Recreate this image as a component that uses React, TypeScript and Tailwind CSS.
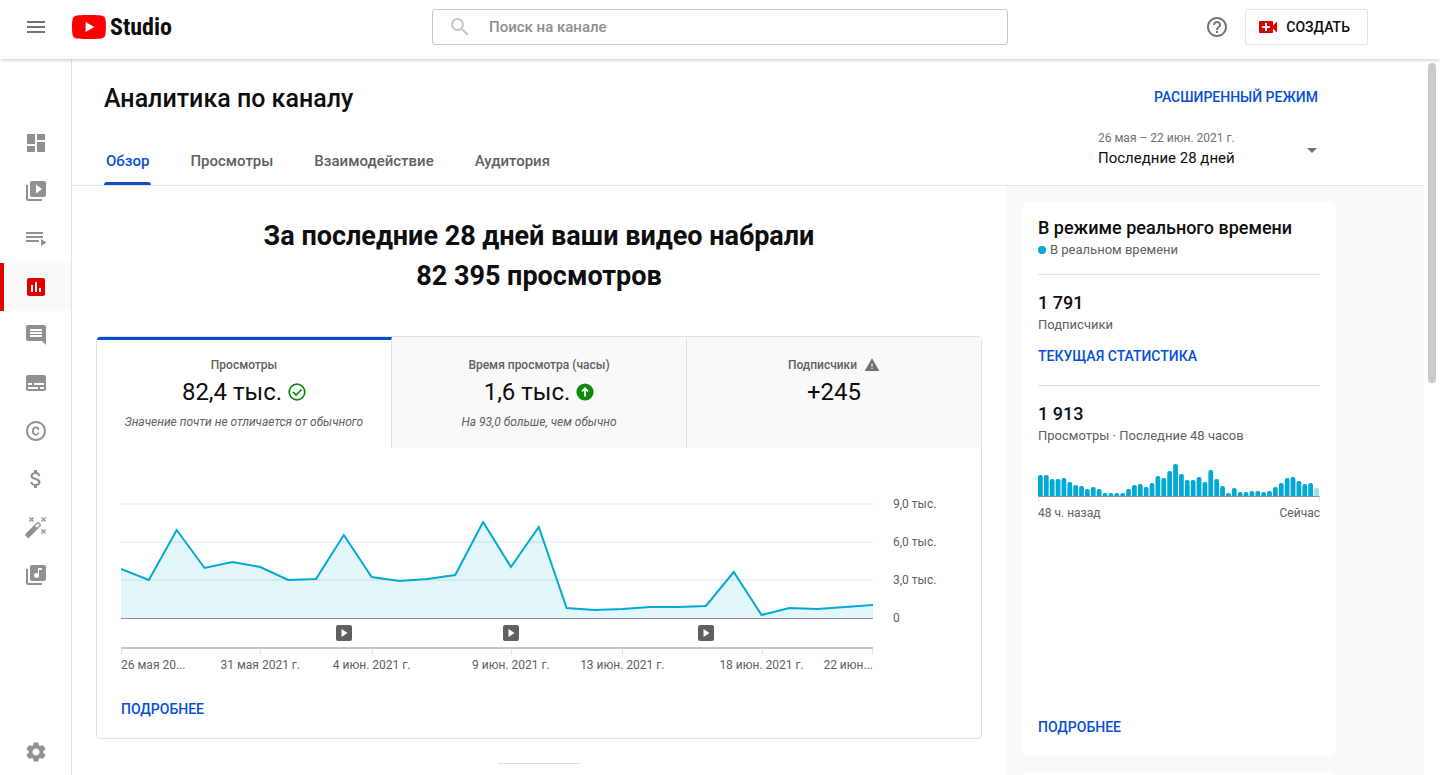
import { useState } from "react";
import {
  MdArrowDropDown,
  MdAttachMoney,
  MdComment,
  MdCopyright,
  MdDashboard,
  MdHelpOutline,
  MdInsertChart,
  MdLibraryMusic,
  MdMenu,
  MdSearch,
  MdSettings,
  MdSubtitles,
  MdVideoCall,
  MdVideoLibrary,
  MdWarning,
} from "react-icons/md";

const CHART_HEIGHT = 116;

// Daily views as chart y coordinates, 26 May to 22 June
const views = [
  66, 77, 27, 65, 59, 64, 77, 76, 32, 74, 78, 76, 72, 19, 64, 24, 105, 107, 106, 104, 104, 103, 69, 112, 105, 106,
  104, 102,
];

const hourly = [
  21, 21, 17, 17, 18, 14, 11, 10, 7, 9, 7, 3, 3, 3, 3, 7, 11, 12, 9, 13, 20, 18, 25, 32, 22, 16, 16, 19, 14, 26, 17,
  10, 3, 8, 4, 4, 5, 5, 4, 5, 9, 13, 18, 19, 15, 12, 13, 8,
];

const axisDates = [
  { day: 0, label: "26 мая 20..." },
  { day: 5, label: "31 мая 2021 г." },
  { day: 9, label: "4 июн. 2021 г." },
  { day: 14, label: "9 июн. 2021 г." },
  { day: 18, label: "13 июн. 2021 г." },
  { day: 23, label: "18 июн. 2021 г." },
  { day: 27, label: "22 июн..." },
];

const uploads = [8, 14, 21];

const percent = (day: number) => `${(day / 27) * 100}%`;

function PlaylistIcon() {
  return (
    <svg viewBox="0 0 24 24" width="24" height="24" fill="currentColor">
      <path d="M2 5h17v2H2zM2 9h17v2H2zM2 13h13v2H2zM17 12l5.5 3.5L17 19z" />
    </svg>
  );
}

function WandIcon() {
  return (
    <svg viewBox="0 0 24 24" width="24" height="24">
      <path
        fill="currentColor"
        fillRule="evenodd"
        d="M1.6 18.8 13 7.4a1.4 1.4 0 0 1 2 0l1.6 1.6a1.4 1.4 0 0 1 0 2L5.2 22.4a1.4 1.4 0 0 1-2 0L1.6 20.8a1.4 1.4 0 0 1 0-2zM11.2 11l1.8 1.8 2.3-2.2c.3-.3.3-.6 0-.9l-.9-.9c-.3-.3-.6-.3-.9 0z"
      />
      <path
        stroke="currentColor"
        strokeWidth="1.3"
        fill="none"
        d="m5.5 2.5 4 4m0-4-4 4m12-4 4 4m0-4-4 4m0 8 4 4m0-4-4 4"
      />
    </svg>
  );
}

function Logo() {
  return (
    <a href="#" aria-label="YouTube Studio" className="flex items-center gap-1 text-[#0d0d0d]">
      <svg viewBox="0 0 34 24" width="34" height="24">
        <path
          fill="#f00"
          d="M33.3 3.8A4.3 4.3 0 0 0 30.3.8C27.6 0 17 0 17 0S6.4 0 3.7.8a4.3 4.3 0 0 0-3 3C0 6.4 0 12 0 12s0 5.6.7 8.2a4.3 4.3 0 0 0 3 3C6.4 24 17 24 17 24s10.6 0 13.3-.8a4.3 4.3 0 0 0 3-3C34 17.6 34 12 34 12s0-5.6-.7-8.2z"
        />
        <path fill="#fff" d="M13.6 17.1V6.9l8.8 5.1z" />
      </svg>
      <span className="font-['Roboto_Condensed','Liberation_Sans_Narrow','Liberation_Sans',sans-serif] text-[24px] leading-6 font-bold">
        Studio
      </span>
    </a>
  );
}

const navItems = [
  { id: "dashboard", label: "Панель управления", icon: <MdDashboard size={24} /> },
  { id: "content", label: "Контент", icon: <MdVideoLibrary size={24} /> },
  { id: "playlists", label: "Плейлисты", icon: <PlaylistIcon /> },
  { id: "analytics", label: "Аналитика", icon: <MdInsertChart size={24} /> },
  { id: "comments", label: "Комментарии", icon: <MdComment size={24} /> },
  { id: "subtitles", label: "Субтитры", icon: <MdSubtitles size={24} /> },
  { id: "copyright", label: "Авторские права", icon: <MdCopyright size={24} /> },
  { id: "monetization", label: "Монетизация", icon: <MdAttachMoney size={24} /> },
  { id: "customization", label: "Настройка канала", icon: <WandIcon /> },
  { id: "audio", label: "Фонотека", icon: <MdLibraryMusic size={24} /> },
];

function Header() {
  return (
    <header className="relative z-10 grid h-[59px] shrink-0 grid-cols-[1fr_minmax(0,576px)_1fr] items-center bg-white pb-[5px] shadow-[0_1px_4px_rgba(0,0,0,0.22)]">
      <div className="flex items-center gap-6 pl-6">
        <button aria-label="Меню" className="text-[#717171]">
          <MdMenu size={24} />
        </button>
        <Logo />
      </div>
      <label className="flex h-9 items-center gap-[17px] rounded-[3px] border border-[#c8c8c8] pl-[15px]">
        <MdSearch size={24} className="text-[#c4c4c4]" />
        <input
          type="text"
          aria-label="Поиск на канале"
          placeholder="Поиск на канале"
          className="min-w-0 flex-1 bg-transparent text-[15px] font-medium outline-none placeholder:text-[#8f8f8f]"
        />
      </label>
      <div className="flex items-center justify-end gap-4 pr-[72px]">
        <button aria-label="Справка" className="text-[#717171]">
          <MdHelpOutline size={24} />
        </button>
        <button className="flex h-9 items-center gap-1.5 rounded-[2px] border border-[#e3e3e3] pr-[17px] pl-2.5 text-[14px] font-medium">
          <MdVideoCall size={24} className="text-[#d90000]" />
          СОЗДАТЬ
        </button>
      </div>
    </header>
  );
}

function Sidebar() {
  return (
    <nav className="flex w-[72px] shrink-0 flex-col border-r border-[#e3e3e3] pt-[60px] text-[#909090]">
      {navItems.map((item) => {
        const active = item.id === "analytics";
        return (
          <a
            key={item.id}
            href="#"
            aria-label={item.label}
            className={
              active
                ? "flex h-12 items-center border-l-4 border-[#e00000] bg-[#f9f9f9] pl-5 text-[#e00000]"
                : "flex h-12 items-center pl-6"
            }
          >
            {item.icon}
          </a>
        );
      })}
      <a href="#" aria-label="Настройки" className="mt-auto flex h-[46px] items-center pl-6">
        <MdSettings size={24} />
      </a>
    </nav>
  );
}

function PageHeader() {
  const [tab, setTab] = useState("Обзор");

  return (
    <div className="flex justify-between border-b border-[#e3e3e3] pl-8">
      <div>
        <h1 className="pt-6 text-[25px] leading-8 font-medium">Аналитика по каналу</h1>
        <div className="mt-[22px] flex gap-[37px]">
          {["Обзор", "Просмотры", "Взаимодействие", "Аудитория"].map((name) => (
            <button
              key={name}
              onClick={() => setTab(name)}
              className={
                name === tab
                  ? "relative h-12 px-0.5 text-[15px] font-medium text-[#064fd5]"
                  : "relative h-12 px-0.5 text-[15px] font-medium text-[#606060]"
              }
            >
              {name}
              {name === tab && <span className="absolute inset-x-0 bottom-0 h-[3px] rounded-t-[3px] bg-[#064fd5]" />}
            </button>
          ))}
        </div>
      </div>
      <div className="mr-[106px] flex w-[220px] flex-col pt-7">
        <a href="#" className="self-end text-[14px] leading-5 font-medium text-[#064fd5]">
          РАСШИРЕННЫЙ РЕЖИМ
        </a>
        <button className="mt-[21px] flex items-center justify-between text-left">
          <span>
            <span className="block text-[12px] leading-5 text-[#717171]">26 мая – 22 июн. 2021 г.</span>
            <span className="block text-[15px] leading-5">Последние 28 дней</span>
          </span>
          <MdArrowDropDown size={24} className="mt-1 -mr-1.5 text-[#717171]" />
        </button>
      </div>
    </div>
  );
}

function MetricTabs() {
  const base = "flex flex-1 flex-col items-center border-t-[3px] pt-[15px] pb-4";

  return (
    <div className="flex divide-x divide-[#e0e0e0]">
      <button className={`${base} border-t-[#064fd5] bg-white`}>
        <span className="text-[12px] leading-5 font-medium text-[#606060]">Просмотры</span>
        <span className="flex items-center gap-1.5 text-[24px] leading-[34px]">
          82,4 тыс.
          <svg viewBox="0 0 18 18" width="18" height="18" fill="none" stroke="#0a8a0a" strokeWidth="1.7">
            <circle cx="9" cy="9" r="7.8" />
            <path d="m5 9 3 3 5.5-5.5" />
          </svg>
        </span>
        <span className="mt-[3px] text-[12px] leading-5 text-[#606060] italic">
          Значение почти не отличается от обычного
        </span>
      </button>
      <button className={`${base} border-t-transparent bg-[#f9f9f9]`}>
        <span className="text-[12px] leading-5 font-medium text-[#606060]">Время просмотра (часы)</span>
        <span className="flex items-center gap-1.5 text-[24px] leading-[34px]">
          1,6 тыс.
          <svg viewBox="0 0 18 18" width="18" height="18">
            <circle cx="9" cy="9" r="8.6" fill="#0a8a0a" />
            <path d="M9 13.5V6M6 8.3l3-3 3 3" fill="none" stroke="#fff" strokeWidth="1.8" />
          </svg>
        </span>
        <span className="mt-[3px] text-[12px] leading-5 text-[#606060] italic">На 93,0 больше, чем обычно</span>
      </button>
      <button className={`${base} border-t-transparent bg-[#f9f9f9]`}>
        <span className="flex items-center gap-[7px] text-[12px] leading-5 font-medium text-[#606060]">
          Подписчики
          <MdWarning size={16} className="text-[#717171]" />
        </span>
        <span className="text-[24px] leading-[34px]">+245</span>
      </button>
    </div>
  );
}

function ViewsChart() {
  const line = views.map((y, i) => `${(i / 27) * 752},${y}`).join(" ");

  return (
    <div className="flex gap-5 px-6 pt-[55px]">
      <div className="min-w-0 flex-1">
        <svg viewBox="0 0 752 116" preserveAspectRatio="none" height={CHART_HEIGHT} className="block w-full">
          {[1, 39, 77].map((y) => (
            <rect key={y} y={y - 1} width="752" height="2" className="fill-[#f1f1f1]" />
          ))}
          <polygon points={`0,115 ${line} 752,115`} fill="#03a9d5" fillOpacity="0.11" />
          <polyline points={line} fill="none" stroke="#03a9d5" strokeWidth="2" vectorEffect="non-scaling-stroke" />
          <rect y="115" width="752" height="1" fill="#8f8f8f" />
        </svg>
        <div className="relative h-7">
          {uploads.map((day) => (
            <button
              key={day}
              aria-label="Опубликованное видео"
              style={{ left: percent(day) }}
              className="absolute top-1.5 flex size-4 -translate-x-1/2 items-center justify-center rounded-[2px] bg-[#606060]"
            >
              <svg viewBox="0 0 16 16" width="16" height="16">
                <path d="M5.5 4v8l6-4z" fill="#fff" />
              </svg>
            </button>
          ))}
        </div>
        <div className="relative h-[27px] border-t-2 border-[#c6c6c6]">
          {axisDates.map(({ day, label }, i) => (
            <div key={day} style={{ left: percent(day) }} className="absolute top-0 w-0">
              <div className={i === axisDates.length - 1 ? "-ml-px h-[5px] w-px bg-[#e3e3e3]" : "h-[5px] w-px bg-[#e3e3e3]"} />
              <div
                className={
                  i === 0
                    ? "flex justify-start"
                    : i === axisDates.length - 1
                      ? "flex justify-end"
                      : "flex justify-center"
                }
              >
                <span className="text-[12px] leading-[22px] whitespace-nowrap text-[#606060]">{label}</span>
              </div>
            </div>
          ))}
        </div>
      </div>
      <div className="-mt-[9px] w-[64px] text-[12px] text-[#606060]">
        {["9,0 тыс.", "6,0 тыс.", "3,0 тыс.", "0"].map((label) => (
          <div key={label} className="h-[38px] leading-5">
            {label}
          </div>
        ))}
      </div>
    </div>
  );
}

function HourlyBars() {
  const step = 282 / hourly.length;

  return (
    <div className="mt-[18px]">
      <svg viewBox="0 0 282 32" preserveAspectRatio="none" height="32" className="block w-full">
        {hourly.map((h, i) => (
          <g key={i} fill="#03a9d5" fillOpacity={i === hourly.length - 1 ? 0.4 : 1}>
            <path d={`M${i * step} 32V${34 - h}q0-2 2-2h.8q2 0 2 2V32z`} />
          </g>
        ))}
      </svg>
      <div className="h-1.5 border-x border-t border-x-[#e3e3e3] border-t-[#8f8f8f]" />
      <div className="flex justify-between pt-[3px] text-[12px] leading-4 text-[#606060]">
        <span>48 ч. назад</span>
        <span>Сейчас</span>
      </div>
    </div>
  );
}

function RealtimeCard() {
  return (
    <section className="flex min-h-[554px] flex-col rounded-md bg-white px-4 pt-4 pb-5">
      <h3 className="text-[18px] leading-5 font-medium">В режиме реального времени</h3>
      <p className="flex items-center gap-1 border-b border-[#e0e0e0] pb-3 text-[13px] leading-6 text-[#606060]">
        <span className="size-2 rounded-full bg-[#03a9d5]" />
        В реальном времени
      </p>
      <div className="flex flex-col items-start border-b border-[#e0e0e0] pt-4 pb-5">
        <strong className="text-[18px] leading-6 font-medium">1 791</strong>
        <span className="text-[13px] leading-5 text-[#606060]">Подписчики</span>
        <a href="#" className="mt-3 text-[14px] leading-[18px] font-medium text-[#064fd5]">
          ТЕКУЩАЯ СТАТИСТИКА
        </a>
      </div>
      <div className="pt-4">
        <strong className="block text-[18px] leading-6 font-medium">1 913</strong>
        <span className="block text-[13px] leading-5 text-[#606060]">Просмотры · Последние 48 часов</span>
        <HourlyBars />
      </div>
      <a href="#" className="mt-auto self-start text-[14px] leading-[18px] font-medium text-[#064fd5]">
        ПОДРОБНЕЕ
      </a>
    </section>
  );
}

export default function App() {
  return (
    <div className="flex h-screen flex-col overflow-hidden bg-white font-[Roboto,'Liberation_Sans',sans-serif] text-[#0d0d0d]">
      <Header />
      <div className="flex min-h-0 flex-1">
        <Sidebar />
        <main className="flex min-w-0 flex-1 flex-col overflow-hidden">
          <PageHeader />
          <div className="flex min-h-0 flex-1">
            <div className="min-w-0 flex-1 px-6 pt-[30px]">
              <h2 className="text-center text-[27px] leading-10 font-bold">
                За последние 28 дней ваши видео набрали
                <br />
                82 395 просмотров
              </h2>
              <section className="mt-10 overflow-hidden rounded border border-[#e0e0e0]">
                <MetricTabs />
                <ViewsChart />
                <a
                  href="#"
                  className="mt-[26px] mb-5 ml-6 inline-block text-[14px] leading-[18px] font-medium text-[#064fd5]"
                >
                  ПОДРОБНЕЕ
                </a>
              </section>
              <hr className="mx-auto mt-6 w-[82px] border-[#e0e0e0]" />
            </div>
            <aside className="flex w-[418px] shrink-0 flex-col gap-4 overflow-hidden bg-[#f9f9f9] pt-4 pr-[88px] pl-4">
              <RealtimeCard />
              <div className="h-40 shrink-0 rounded-md bg-white" />
            </aside>
          </div>
        </main>
        <div className="w-4 shrink-0 px-1 pt-1">
          <div className="h-80 rounded-full bg-[#cbcbcb]" />
        </div>
      </div>
    </div>
  );
}
